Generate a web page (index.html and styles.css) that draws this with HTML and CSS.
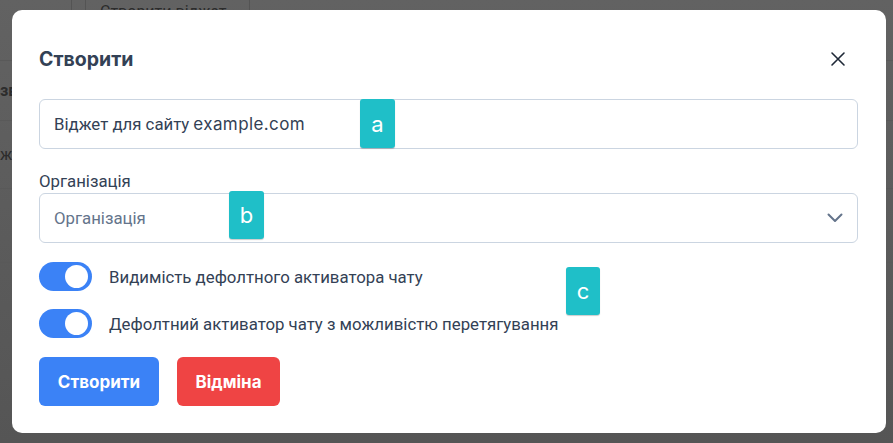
FILE: index.html
```html
<!DOCTYPE html>
<html lang="uk">
<head>
<meta charset="utf-8">
<title>Створити</title>
<link rel="stylesheet" href="styles.css">
</head>
<body>
<div class="page">
  <div class="page-top">
    <div class="pt-cell c1"></div>
    <div class="pt-cell c2"></div>
    <div class="pt-cell c3"><span class="ghost">Створити віджет</span></div>
  </div>
  <div class="page-row r1"><span class="ghost">зва</span></div>
  <div class="page-row r2"><span class="ghost">жет</span></div>
  <div class="page-row r3"></div>
  <div class="page-row r4"></div>
</div>

<div class="overlay">
  <div class="modal">
    <div class="modal-header">
      <h2 class="modal-title">Створити</h2>
      <button class="close" aria-label="Закрити">
        <svg width="16" height="16" viewBox="0 0 16 16"><path d="M2 2 L14 14 M14 2 L2 14" stroke="#1f2937" stroke-width="1.6" stroke-linecap="round" fill="none"/></svg>
      </button>
    </div>

    <div class="field">Віджет для сайту <span class="latin">example.com</span></div>

    <div class="label">Організація</div>
    <div class="field select">
      <span class="placeholder">Організація</span>
      <svg class="chev" width="16" height="10" viewBox="0 0 16 10"><path d="M1.5 1.5 L8 8 L14.5 1.5" stroke="#64748b" stroke-width="2" fill="none" stroke-linecap="round" stroke-linejoin="round"/></svg>
    </div>

    <div class="toggles">
      <div class="toggle-row"><span class="switch"><span class="knob"></span></span><span>Видимість дефолтного активатора чату</span></div>
      <div class="toggle-row"><span class="switch"><span class="knob"></span></span><span>Дефолтний активатор чату з можливістю перетягування</span></div>
    </div>

    <div class="actions">
      <button class="btn primary">Створити</button>
      <button class="btn danger">Відміна</button>
    </div>

    <span class="badge ba">a</span>
    <span class="badge bb">b</span>
    <span class="badge bc">c</span>
  </div>
</div>
</body>
</html>
```

FILE: styles.css
```css
* { box-sizing: border-box; }
html, body { margin: 0; height: 100%; }
body {
  font-family: Roboto, "Noto Sans", sans-serif;
  background: linear-gradient(#626262, #555555);
  overflow: hidden;
}
.page { height: 443px; }
.page-top { display: flex; height: 30px; }
.pt-cell { border-right: 1px solid #545454; height: 10px; }
.c1 { width: 72px; }
.c2 { width: 14px; }
.c3 { width: 164px; padding-left: 14px; }
.ghost { color: #2c2c2c; font-size: 16px; line-height: 16px; display: block; margin-top: 4px; }
.page-row { border-bottom: 1px solid #595959; display: flex; align-items: center; }
.r1 { height: 61px; border-top: 1px solid #595959; margin-top: 30px; }
.r1 .ghost { font-weight: 700; margin-top: 0; }
.r2 { height: 68px; }
.r2 .ghost { margin-top: 0; }
.r3 { height: 74px; }
.r4 { height: 57px; }

.overlay {
  position: fixed;
  inset: 0;
  padding: 10px 0 0 12px;
  display: flex;
  align-items: flex-start;
}
.modal {
  position: relative;
  width: 874px;
  background: #fff;
  border-radius: 10px;
  padding: 28px 28px 27px 27px;
  display: flex;
  flex-direction: column;
  color: #334155;
}
.modal-header {
  height: 42px;
  display: flex;
  align-items: center;
  justify-content: space-between;
  margin-bottom: 19px;
}
.modal-title { margin: 0; font-family: Inter, sans-serif; font-size: 19.5px; font-weight: 700; color: #334155; }
.close {
  background: none; border: 0; padding: 0; margin-right: 12px;
  width: 16px; height: 16px; display: flex;
}
.field {
  height: 50px;
  border: 1px solid #cbd5e1;
  border-radius: 6px;
  padding: 0 14px;
  display: flex;
  align-items: center;
  font-size: 16.8px;
  color: #334155;
}
.latin { font-family: Inter, sans-serif; font-size: 17px; letter-spacing: 0.4px; margin-left: 4px; }
.label { margin-top: 20px; line-height: 24px; font-size: 16.8px; color: #334155; }
.select { justify-content: space-between; padding-right: 14px; }
.placeholder { color: #64748b; }
.toggles { margin-top: 19px; display: flex; flex-direction: column; gap: 18px; }
.toggle-row { display: flex; align-items: center; gap: 17px; font-size: 16.8px; color: #334155; height: 29px; }
.switch {
  position: relative;
  width: 53px; height: 29px; border-radius: 15px;
  background: #3b82f6;
  flex: none;
}
.knob {
  position: absolute; top: 3px; right: 4px;
  width: 23px; height: 23px; border-radius: 50%; background: #fff;
}
.actions { margin-top: 19px; display: flex; gap: 18px; }
.btn {
  height: 49px; border: 0; border-radius: 6px; color: #fff;
  font-family: Inter, sans-serif; font-size: 17px; font-weight: 700;
}
.primary { width: 120px; background: #3b82f6; }
.danger { width: 103px; background: #ef4444; }
.badge {
  position: absolute;
  width: 35px; height: 49px;
  background: #1fbfc8;
  border-radius: 3px;
  color: #fff;
  font-family: Inter, sans-serif;
  font-size: 22px;
  display: flex; align-items: center; justify-content: center;
  box-shadow: 0 1px 1px rgba(0,0,0,0.2);
}
.ba { left: 348px; top: 89px; }
.bb { left: 217px; top: 181px; height: 48px; }
.bc { left: 554px; top: 257px; width: 34px; height: 48px; }
```
